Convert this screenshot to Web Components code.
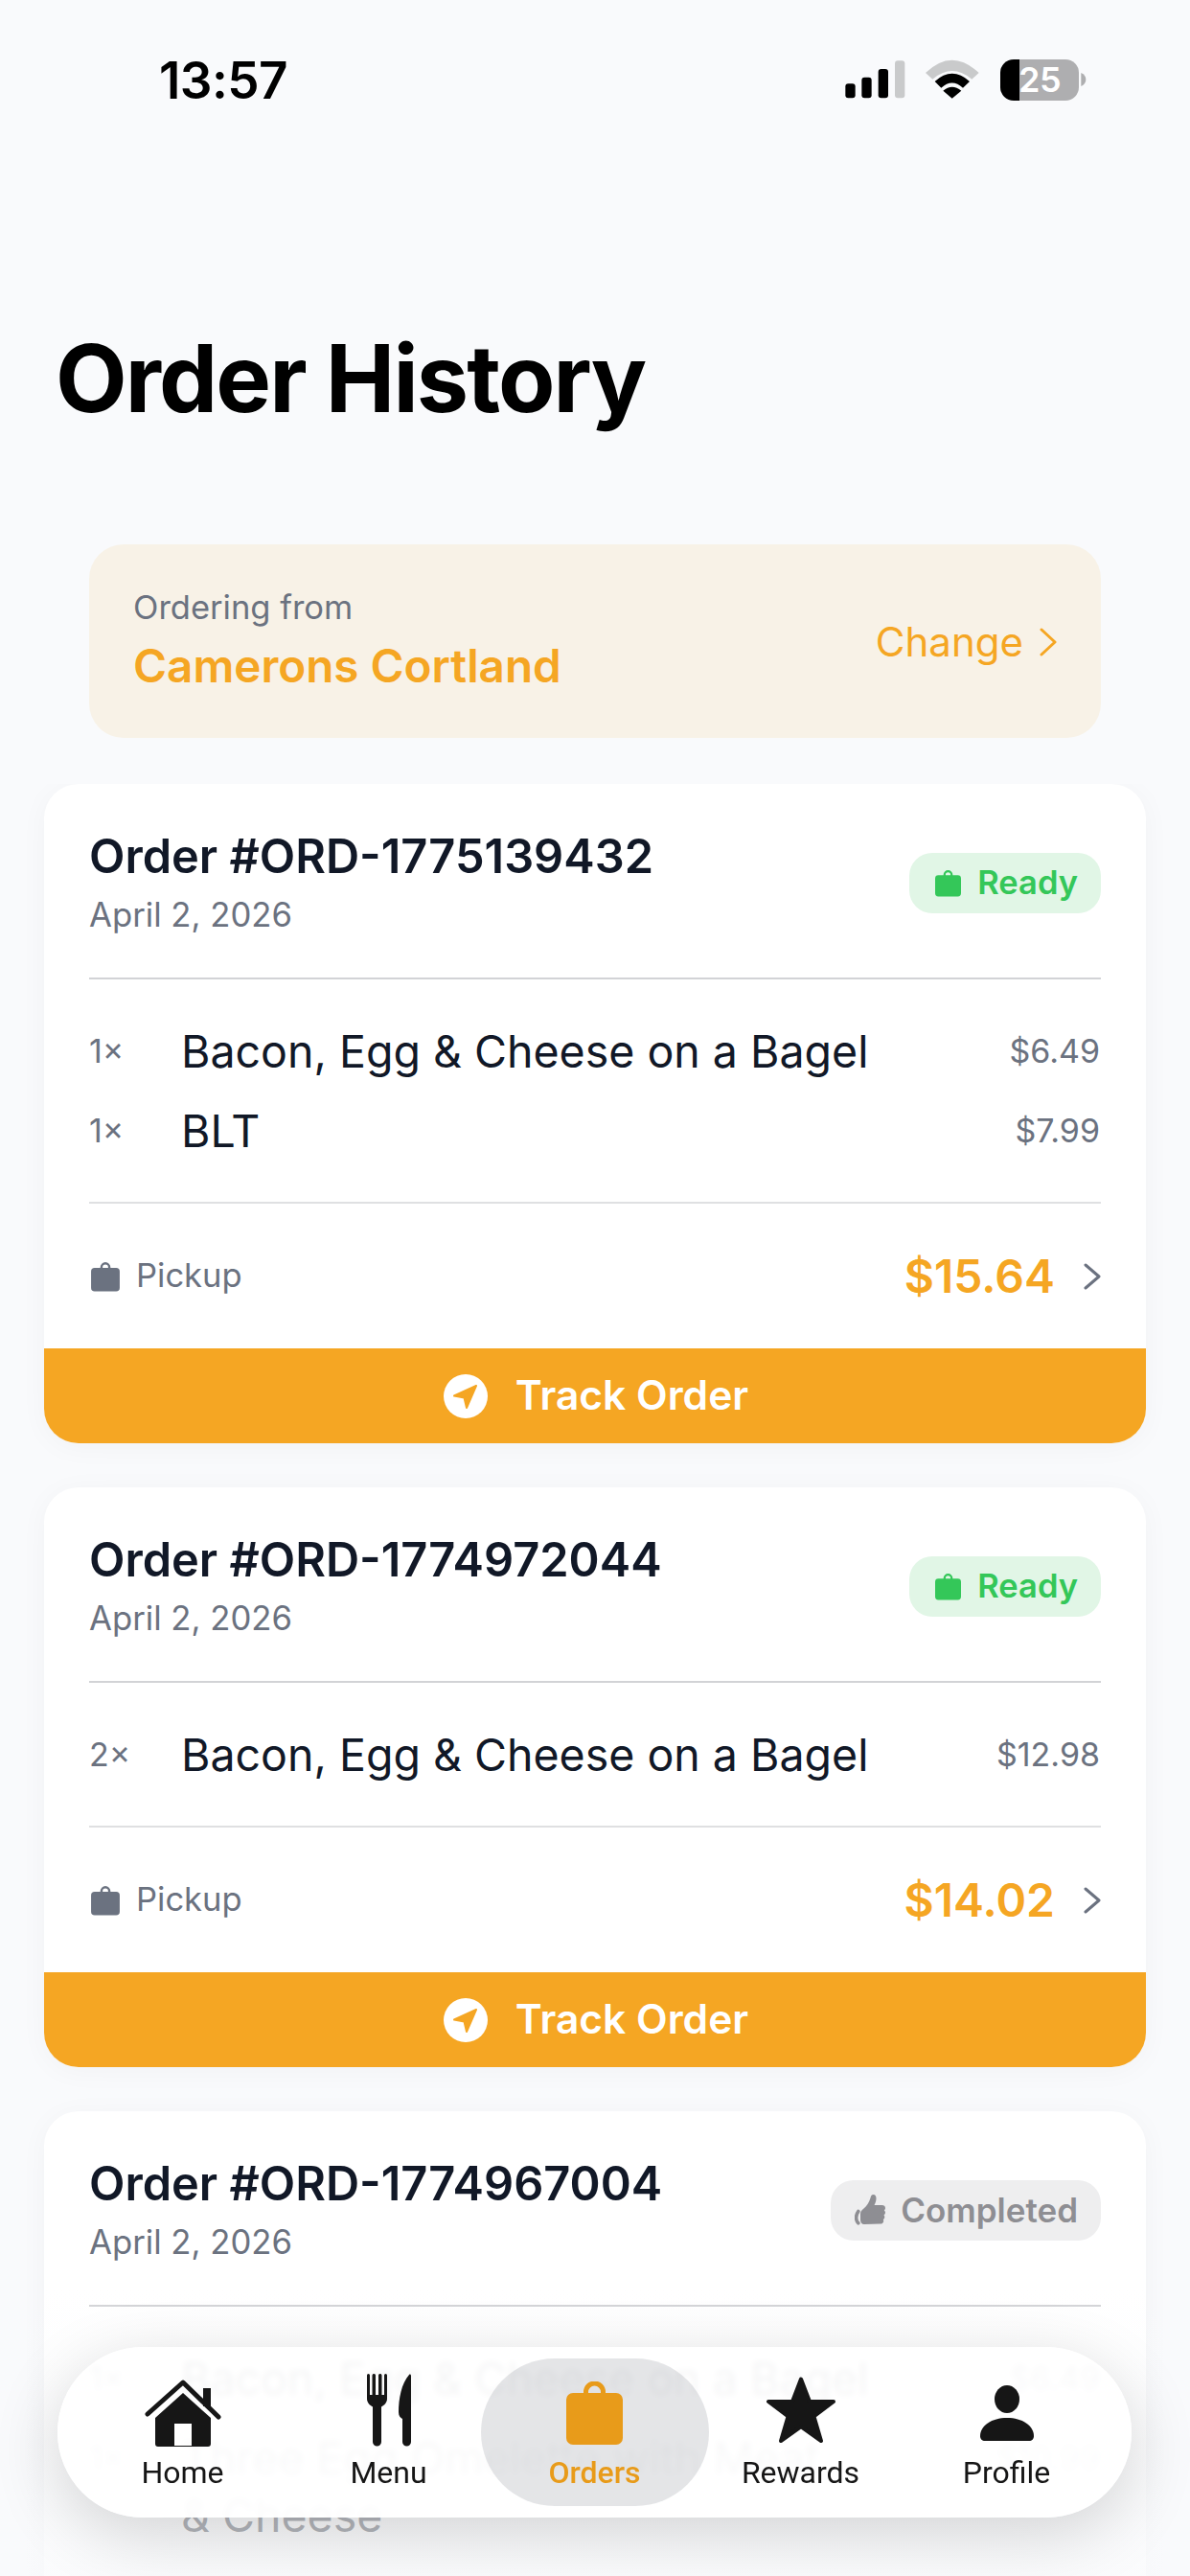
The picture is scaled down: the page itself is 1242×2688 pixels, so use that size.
<!DOCTYPE html>
<html lang="en"><head><meta charset="utf-8"><title>Order History</title>
<style>
html,body{margin:0;padding:0;background:#f9fafc}
body{width:1242px;height:2688px;overflow:hidden;position:relative;display:flex;flex-direction:column;font-family:Inter,"Liberation Sans",sans-serif;color:#111827}
</style></head><body>
<template id="bag"><svg viewBox="1 0 28 30" width="100%" height="100%"><path fill="currentColor" d="M10 6.500V6a5 5 0 0 1 10 0v.5h5.500A3.500 3.500 0 0 1 29 10v16a3.500 3.500 0 0 1-3.500 3.500h-21A3.500 3.500 0 0 1 1 26V10a3.500 3.500 0 0 1 3.500-3.500zM12.300 6.500h5.400V6a2.700 2.700 0 0 0-5.400 0z"/></svg></template>
<status-bar></status-bar>
<page-title>Order History</page-title>
<store-card store="Camerons Cortland"></store-card>
<order-list>
<order-card number="1775139432" date="April 2, 2026" status="ready" total="$15.64" track>
  <order-item qty="1×" price="$6.49">Bacon, Egg &amp; Cheese on a Bagel</order-item>
  <order-item qty="1×" price="$7.99">BLT</order-item>
</order-card>
<order-card number="1774972044" date="April 2, 2026" status="ready" total="$14.02" track>
  <order-item qty="2×" price="$12.98">Bacon, Egg &amp; Cheese on a Bagel</order-item>
</order-card>
<order-card number="1774967004" date="April 2, 2026" status="completed">
  <order-item qty="1×" price="$6.49">Bacon, Egg &amp; Cheese on a Bagel</order-item>
  <order-item qty="1×" price="$10.99">Three Egg Omelette with Meat<br>&amp; Cheese</order-item>
</order-card>
</order-list>
<tab-bar></tab-bar>
<script>
const BAG=document.getElementById('bag').innerHTML;
function def(name,html,init){customElements.define(name,class extends HTMLElement{connectedCallback(){if(this.shadowRoot)return;const r=this.attachShadow({mode:'open'});r.innerHTML=typeof html==='function'?html(this):html;if(init)init(this,r)}})}
def('status-bar',`<style>
:host{display:flex;flex:none;height:147px;box-sizing:border-box;padding:60px 0 0 166px;justify-content:space-between;align-items:flex-start}
.t{font:600 53px/48px Inter,sans-serif;letter-spacing:-.6px;color:#000;width:140px}
.r{position:relative;width:320px;height:90px;margin:-20px 82px 0 0}
svg{position:absolute;left:0;top:0}
.b{position:absolute;left:204px;top:22px;width:82px;height:42.700px;border-radius:14px;overflow:hidden;background:linear-gradient(90deg,#000 0 20px,#aeaeb0 20px);display:flex;align-items:center;justify-content:center;font:600 36px/1 Inter,sans-serif;color:#fff;letter-spacing:-.5px}
</style><div class="t">13:57</div><div class="r"><svg width="320" height="90" viewBox="0 0 960 270">
<rect x="127" y="142" width="31" height="45" rx="9"/><rect x="178" y="122" width="31" height="65" rx="9"/><rect x="230" y="96" width="31" height="91" rx="9"/><rect x="282" y="70" width="31" height="117" rx="9" fill="#c9cacb"/>
<path fill="#c9cacb" d="M378 108Q461 28 545 108L523 128Q461 76 400 128Z"/>
<path d="M407 135Q461 86 516 135L495 155Q461 124 427 155Z"/><path d="M433 164Q461 140 490 164L461 188Z"/>
<path fill="#aeaeb0" d="M865 108Q880 115 880 129Q880 143 865 150Z"/></svg><div class="b">25</div></div>`);
def('page-title',`<style>:host{display:block;flex:none;padding:0 0 0 58px;margin:189px 0 115px}
h1{margin:0;font:700 97px/117px Inter,sans-serif;letter-spacing:-1.900px;color:#000}</style><h1><slot></slot></h1>`);
def('store-card',h=>`<style>:host{display:flex;flex:none;align-items:center;justify-content:space-between;box-sizing:border-box;height:202px;margin:0 93px 48px;padding:0 46px 0 46px;background:#f8f2e7;border-radius:36px}
.l{font:400 34.500px/46px Inter,sans-serif;color:#6b7280}.s{font:600 47.600px/64px Inter,sans-serif;color:#f5a623;margin-top:6px}
.c{display:flex;align-items:center;gap:17px;font:400 42px/1 Inter,sans-serif;color:#f5a623;padding-top:2px}svg{display:block}</style>
<div><div class="l">Ordering from</div><div class="s">${h.getAttribute('store')}</div></div>
<div class="c"><span>Change</span><svg width="18" height="30" viewBox="0 0 18 30" fill="none" stroke="#f5a623" stroke-width="3" stroke-linecap="round" stroke-linejoin="round"><path d="M2 2l14 13L2 28"/></svg></div>`);
def('order-list',`<style>:host{display:flex;flex-direction:column;flex:1;min-height:0;overflow:hidden;gap:46px;padding:0 46px}::slotted(*){flex:none}</style><slot></slot>`);
def('status-badge',h=>{const c=h.getAttribute('status')==='completed';return `<style>:host{display:flex;align-items:center;box-sizing:border-box;height:63px;padding:0 24px 0 ${c?25:27}px;gap:${c?16:17}px;border-radius:24px;background:${c?'#eeeeef':'#e1f6e6'};color:${c?'#8e8e93':'#34c759'};font:600 ${c?35:34.5}px/1 Inter,sans-serif}
i{display:block;width:${c?32:27}px;height:${c?32:29}px;flex:none}</style>
<i>${c?`<svg viewBox="0 0 32 32" width="32" height="32"><path fill="currentColor" d="M10 31c-2.500 0-4-2-4-4.500V20c0-2.500 1.500-4 3.500-5.500 3-2.500 5.500-6 7-11 .5-2 1-3.500 3-3.500 2.200 0 3 2 3 4 0 2.700-1 5-2 7h8c2 0 3.500 1.300 3.500 3 0 1-.5 1.800-1.200 2.400.8.600 1.200 1.400 1.200 2.400 0 1.100-.6 2-1.500 2.500.5.600.8 1.300.8 2.100 0 1.100-.6 2-1.500 2.500.3.500.4 1 .4 1.500 0 2-1.500 3.100-3.500 3.100z"/><path fill="none" stroke="currentColor" stroke-width="3.600" stroke-linecap="round" d="M3.800 17.500C.7 22 1 27 3.800 29.800"/></svg>`:BAG}</i><span>${c?'Completed':'Ready'}</span>`});
def('order-item',h=>`<style>:host{display:flex;align-items:flex-start;line-height:60px}
.q{width:96px;flex:none;font:400 34px/60px Inter,sans-serif;color:#6b7280}
.n{flex:1;font:400 46.500px/60px Inter,sans-serif;color:#111827}
.p{font:400 34px/60px Inter,sans-serif;color:#6b7280;padding-right:1px}</style>
<span class="q">${h.getAttribute('qty')}</span><span class="n"><slot></slot></span><span class="p">${h.getAttribute('price')}</span>`);
def('order-card',h=>`<style>:host{display:block;background:#fff;border-radius:36px 36px ${h.hasAttribute('track')?'36px 36px':'0 0'};box-shadow:0 4px 30px rgba(0,0,0,.035);overflow:hidden}
.h{display:flex;justify-content:space-between;align-items:center;margin:0 47px;padding:47px 0 43px;border-bottom:2px solid #d2d3d6;height:112px;box-sizing:content-box}
.o{font:600 48.700px/60px Inter,sans-serif;color:#111827}.d{font:400 34.700px/48px Inter,sans-serif;color:#6b7280;margin-top:6px}
.i{display:flex;flex-direction:column;gap:23px;margin:0 47px;padding:44.500px 0 44.500px}
.s{border-bottom:2px solid #dfe0e2}
.f{display:flex;align-items:center;justify-content:space-between;margin:0 47px;height:151px}
.pk{display:flex;align-items:center;gap:17px;font:400 34.500px/1 Inter,sans-serif;color:#6b7280}.pk i{display:block;width:30px;height:32px;color:#6b7280;margin-left:2px}
.tt{display:flex;align-items:center;gap:30px}.m{font:600 48px/1 Inter,sans-serif;color:#f5a623}
svg{display:block}
.b{display:flex;align-items:center;justify-content:center;gap:29px;height:99px;padding-left:2px;background:#f5a623;color:#fff;font:600 42.500px/1 Inter,sans-serif}
</style>
<div class="h"><div><div class="o">Order #ORD-${h.getAttribute('number')}</div><div class="d">${h.getAttribute('date')}</div></div><status-badge status="${h.getAttribute('status')}"></status-badge></div>
<div class="i ${h.hasAttribute('total')?'s':''}"><slot></slot></div>
${h.hasAttribute('total')?`<div class="f"><div class="pk"><i>${BAG}</i><span>Pickup</span></div><div class="tt"><span class="m">${h.getAttribute('total')}</span><svg width="18" height="28" viewBox="0 0 18 28" fill="none" stroke="#6b7280" stroke-width="3" stroke-linecap="round" stroke-linejoin="round"><path d="M2 2l14 12L2 26"/></svg></div></div>`:''}
${h.hasAttribute('track')?`<div class="b"><svg width="46" height="46" viewBox="0 0 46 46"><circle cx="23" cy="23" r="23" fill="#fff"/><path fill="#f5a623" d="M34 12L11 22.500l10.500 2 2.500 10.500z" stroke="#f5a623" stroke-width="2" stroke-linejoin="round"/></svg><span>Track Order</span></div>`:''}`);
const ICONS={
home:`<svg width="80" height="70" viewBox="0 0 80 70"><path fill="none" stroke="#161616" stroke-width="5" stroke-linecap="round" stroke-linejoin="round" d="M3 36L40 3l37 36"/><rect x="61" y="9" width="8" height="19" fill="#161616"/><path fill="#161616" fill-rule="evenodd" d="M40 14L69 40v27a3 3 0 0 1-3 3H14a3 3 0 0 1-3-3V40zM31 46v23h18V46z"/></svg>`,
menu:`<svg width="48" height="76" viewBox="0 0 48 76"><path fill="#161616" d="M1 1.500a1.500 1.500 0 0 1 3 0V22h2.500V1.500a1.800 1.800 0 0 1 3.500 0V22h3V1.500a1.800 1.800 0 0 1 3.500 0V22h2.500V1.500a1.500 1.500 0 0 1 3 0V26c0 4-3 7-6 8.500V71a4.500 4.500 0 0 1-9 0V34.500C4 33 1 30 1 26z"/><path fill="#161616" d="M47 2v69a4.500 4.500 0 0 1-9 0V47c-2-1-4-3-4-7 0-14 3-30 11-39 1-1 2 0 2 1z"/></svg>`,
orders:`<div style="width:59px;height:66px;color:#e89b1a"><svg viewBox="0 0 59 66" width="59" height="66"><path fill="currentColor" d="M18 12v-1a11.500 11.500 0 0 1 23 0v1h11a7 7 0 0 1 7 7v40a7 7 0 0 1-7 7H7a7 7 0 0 1-7-7V19a7 7 0 0 1 7-7zM23 12h13v-1a6.500 6.500 0 0 0-13 0z"/></svg></div>`,
rewards:`<svg width="74" height="70" viewBox="0 0 74 70"><path fill="#161616" stroke="#161616" stroke-width="4" stroke-linejoin="round" d="M37 2.500l9 23.500h25L50.500 41.500 58 67 37 52 16 67l7.500-25.500L3 26h25z"/></svg>`,
profile:`<svg width="56" height="58" viewBox="0 0 56 58"><ellipse cx="28" cy="14.500" rx="13" ry="14.500" fill="#161616"/><path fill="#161616" d="M0 53C0 42 12 34 28 34s28 8 28 19c0 3-2 5-5 5H5c-3 0-5-2-5-5z"/></svg>`};
def('tab-item',h=>{const k=h.getAttribute('icon');const a=h.hasAttribute('active');return `<style>:host{display:flex;flex-direction:column;align-items:center;width:215px;height:178px;position:relative;z-index:1}
.g{height:108px;padding-top:${k==='profile'?40:k==='menu'?28:k==='orders'?36:k==='home'?34:31}px;box-sizing:border-box}
svg{display:block}.l{font:${a?500:400} 32px/30px Roboto,sans-serif;color:${a?'#e89b1a':'#161616'};margin-top:8px;white-space:nowrap}</style>
<div class="g">${ICONS[k]}</div><div class="l">${h.getAttribute('label')}</div>`});
def('tab-bar',`<style>:host{display:block;position:absolute;left:0;right:0;bottom:0;height:300px;background:linear-gradient(rgba(249,250,252,0),rgba(249,250,252,.7) 78%)}
nav{position:absolute;left:60px;top:61px;width:1121px;height:178px;box-sizing:border-box;padding:0 23px;display:flex;border-radius:89px;background:rgba(255,255,255,.94);-webkit-backdrop-filter:blur(3px);backdrop-filter:blur(3px);box-shadow:0 18px 70px rgba(0,0,0,.16)}
.p{position:absolute;left:442px;top:12px;width:238px;height:154px;border-radius:77px;background:rgba(120,125,135,.2)}
</style><nav><div class="p"></div>
<tab-item icon="home" label="Home"></tab-item><tab-item icon="menu" label="Menu"></tab-item><tab-item icon="orders" label="Orders" active></tab-item><tab-item icon="rewards" label="Rewards"></tab-item><tab-item icon="profile" label="Profile"></tab-item></nav>`);
</script>
</body></html>
